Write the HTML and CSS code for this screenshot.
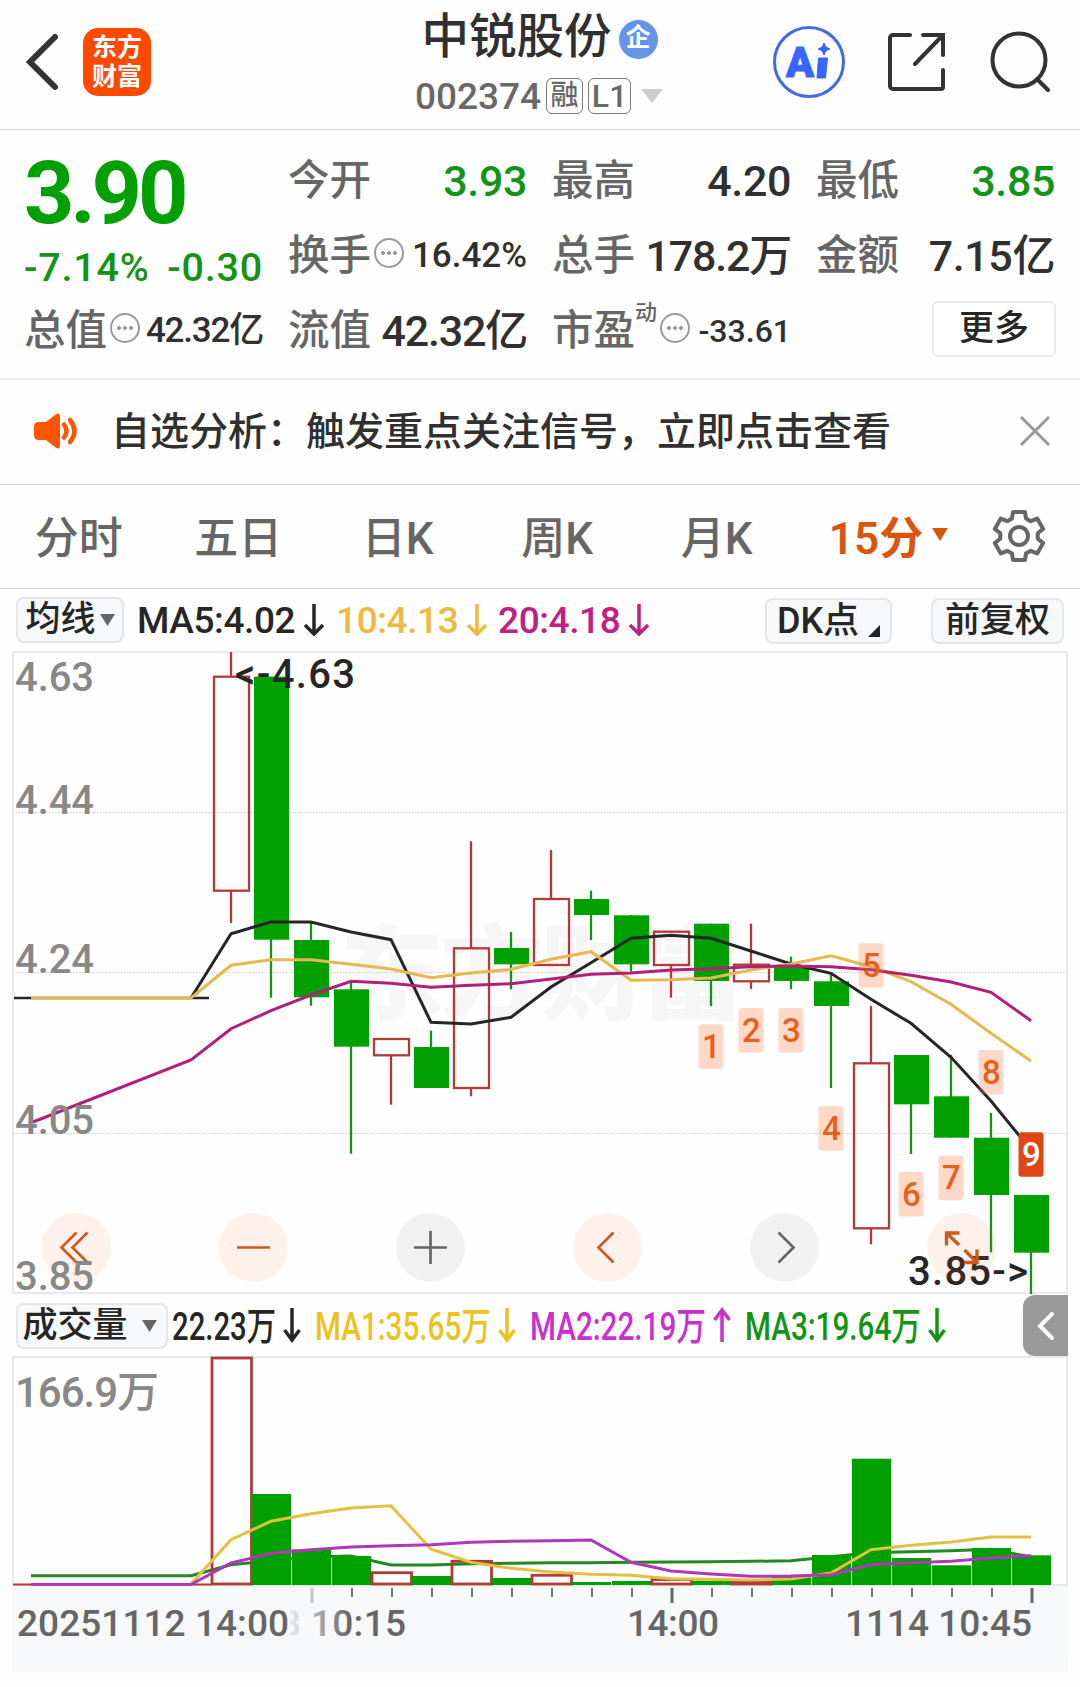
FILE: index.html
```html
<!DOCTYPE html>
<html lang="zh-CN">
<head>
    <meta charset="UTF-8">
    <meta name="viewport" content="width=device-width, initial-scale=1.0">
    <title>中锐股份 002374</title>
    <link rel="stylesheet" href="styles.css">
</head>
<body>
    <!-- Top bar -->
    <header class="topbar">
        <div class="topbar-left">
            <svg class="back" width="34" height="60" viewBox="0 0 34 60"><path d="M30 5L5 30l25 25" /></svg>
            <div class="logo"><span>东方</span><span>财富</span></div>
        </div>
        <div class="stock">
            <div class="stock-name">中锐股份<span class="corp">企</span></div>
            <div class="stock-code">
                <span class="code">002374</span><span class="tag">融</span><span class="tag tag-l1">L1</span>
                <svg class="code-arrow" width="22" height="14"><path d="M0 0h22L11 14z" /></svg>
            </div>
        </div>
        <div class="topbar-right">
            <svg class="ai" width="74" height="74" viewBox="0 0 74 74">
                <circle cx="37" cy="37" r="34.5" />
                <text x="14" y="52" textLength="28" lengthAdjust="spacingAndGlyphs">A</text>
                <path d="M46.500 33h9l-2 20h-8.500z M52 18l1.800 4 4 2-4 2-1.800 4-1.800-4-4-2 4-2z" />
            </svg>
            <svg class="share" width="62" height="62" viewBox="0 0 62 62">
                <path d="M23 4H6a3 3 0 0 0-3 3v48a3 3 0 0 0 3 3h48a2 2 0 0 0 2-2V39M36 4h20v20M56 4L28 33" />
            </svg>
            <svg class="search" width="64" height="64" viewBox="0 0 64 64">
                <circle cx="31" cy="30" r="26.500" /><path d="M49 49l11 11" />
            </svg>
        </div>
    </header>

    <!-- Quote summary -->
    <section class="quote">
        <div class="price-box">
            <div class="price">3.90</div>
            <div class="change"><span>-7.14%</span><span>-0.30</span></div>
        </div>
        <div class="item"><span class="label">今开</span><span class="value green">3.93</span></div>
        <div class="item"><span class="label">最高</span><span class="value">4.20</span></div>
        <div class="item"><span class="label">最低</span><span class="value green">3.85</span></div>
        <div class="item"><span class="label">换手</span><i class="dots"></i><span class="value mid">16.42%</span></div>
        <div class="item"><span class="label">总手</span><span class="value unit">178.2万</span></div>
        <div class="item"><span class="label">金额</span><span class="value">7.15亿</span></div>
        <div class="item"><span class="label">总值</span><i class="dots"></i><span class="value mid unit">42.32亿</span></div>
        <div class="item"><span class="label">流值</span><span class="value unit">42.32亿</span></div>
        <div class="item"><span class="label">市盈</span><sup class="dyn">动</sup><i class="dots"></i><span class="value small">-33.61</span></div>
        <button class="more">更多</button>
    </section>

    <!-- Notice -->
    <section class="notice">
        <svg class="horn" width="48" height="38" viewBox="0 0 48 38">
            <path class="horn-body" d="M7 10h7l9-7q5-4 5 2v28q0 6-5 2l-9-7H7q-5 0-5-5v-8q0-5 5-5z" />
            <path class="horn-wave" d="M32 12.500q5 6.500 0 13M38 8q9 11 0 22" />
        </svg>
        <p>自选分析：触发重点关注信号，立即点击查看</p>
        <svg class="close" width="30" height="30"><path d="M1 1l28 28M29 1L1 29" /></svg>
    </section>

    <!-- Period tabs -->
    <nav class="tabs">
        <a>分时</a>
        <a>五日</a>
        <a>日K</a>
        <a>周K</a>
        <a>月K</a>
        <a class="active">15分<svg width="16" height="13"><path d="M0 0h16L8 13z" /></svg></a>
        <svg class="gear" width="54" height="54" viewBox="-27 -27 54 54">
            <path d="M-7-17.500L-6-24h12l1 6.500 4.700 2.700 6.500-2.600 6 10.300-5.500 4.400v5.400l5.500 4.400-6 10.300-6.500-2.600L7 17.500 6 24H-6l-1-6.500-4.700-2.700-6.500 2.600-6-10.300 5.500-4.400v-5.400l-5.500-4.400 6-10.300 6.500 2.600z" />
            <circle r="9" />
        </svg>
    </nav>

    <!-- Moving averages -->
    <div class="legend">
        <button class="btn btn-ma">均线<svg width="15" height="12"><path d="M0 0h15L7.500 12z" /></svg></button>
        <span class="ma ma5">MA5:4.02<svg class="arrow" width="22" height="32"><path d="M11 0v30M2 21l9 9 9-9" /></svg></span>
        <span class="ma ma10">10:4.13<svg class="arrow" width="22" height="32"><path d="M11 0v30M2 21l9 9 9-9" /></svg></span>
        <span class="ma ma20">20:4.18<svg class="arrow" width="22" height="32"><path d="M11 0v30M2 21l9 9 9-9" /></svg></span>
        <button class="btn btn-dk">DK点<svg width="12" height="12"><path d="M12 0v12H0z" /></svg></button>
        <button class="btn btn-fq">前复权</button>
    </div>

    <!-- Candles -->
    <svg class="chart" id="kline" width="1080" height="644" viewBox="0 651 1080 644">
        <text class="watermark" x="340" y="1012" textLength="405">东方财富</text>
        <rect class="frame" x="13" y="652" width="1054" height="641" />
        <path class="grid" d="M13 812.500h1054M13 972.500h1054M13 1133.500h1054" />
        <g id="candles"></g>
        <path class="flat" d="M14 998h195" />
        <g id="maLines"></g>
        <g id="marks"></g>
        <text class="tip" x="908" y="1285" textLength="120">3.85-&gt;</text>
        <g class="tool hot">
            <circle cx="76.500" cy="1247.500" r="34.500" /><circle cx="253.500" cy="1247.500" r="34.500" />
            <circle cx="607.500" cy="1247.500" r="34.500" /><circle cx="961.500" cy="1247.500" r="34.500" />
            <path d="M76.500 1232.500l-15 15 15 15M87.500 1232.500l-15 15 15 15M237 1247.500h33M613.500 1232.500l-15 15 15 15" />
            <path class="expand" d="M946.500 1245.500v-12.500h13M947 1233.500l12 11.500M977 1249.500v13h-13M976.500 1262l-12-12" />
        </g>
        <g class="tool">
            <circle cx="430.500" cy="1247.500" r="34.500" /><circle cx="784.500" cy="1247.500" r="34.500" />
            <path d="M414 1247.500h33M430.500 1231v33M778.500 1232.500l15 15-15 15" />
        </g>
        <g class="scale">
            <text x="15" y="690.500" textLength="79">4.63</text>
            <text x="15" y="813.500" textLength="79">4.44</text>
            <text x="15" y="973" textLength="79">4.24</text>
            <text x="15" y="1134" textLength="79">4.05</text>
            <text x="15" y="1290" textLength="79">3.85</text>
        </g>
        <text class="tip" x="235" y="688" textLength="120">&lt;-4.63</text>
    </svg>

    <!-- Volume -->
    <div class="legend legend-vol">
        <button class="btn btn-vol">成交量<svg width="15" height="12"><path d="M0 0h15L7.500 12z" /></svg></button>
        <svg class="vol-values" width="800" height="60" viewBox="168 1295 800 60">
            <g class="v0"><text x="172" y="1338.500" textLength="104" lengthAdjust="spacingAndGlyphs">22.23万</text><path d="M292 1307v32M284.500 1329l7.500 10 7.500-10" /></g>
            <g class="v1"><text x="315" y="1338.500" textLength="176" lengthAdjust="spacingAndGlyphs">MA1:35.65万</text><path d="M507 1307v32M499.500 1329l7.500 10 7.500-10" /></g>
            <g class="v2"><text x="530" y="1338.500" textLength="176" lengthAdjust="spacingAndGlyphs">MA2:22.19万</text><path d="M722 1341v-32M714.500 1319l7.500-10 7.500 10" /></g>
            <g class="v3"><text x="745" y="1338.500" textLength="176" lengthAdjust="spacingAndGlyphs">MA3:19.64万</text><path d="M937 1307v32M929.500 1329l7.500 10 7.500-10" /></g>
        </svg>
        <button class="side"><svg width="18" height="28"><path d="M15 2L3 14l12 12" /></svg></button>
    </div>
    <svg class="chart" width="1080" height="316" viewBox="0 1356 1080 316">
        <defs>
            <linearGradient id="fade" gradientUnits="userSpaceOnUse" x1="285" x2="350" y1="0" y2="0">
                <stop offset="0" stop-color="#f4f4f5" /><stop offset="1" stop-color="#666" />
            </linearGradient>
        </defs>
        <rect class="axis" x="12" y="1586" width="1056" height="86" />
        <rect class="frame" x="13" y="1357" width="1054" height="228" />
        <path class="red-line" d="M13 1584.500h199" />
        <g id="volBack"></g>
        <g id="bars"></g>
        <g id="volLines"></g>
        <g id="ticks"></g>
        <text class="vol-max" x="15" y="1407" textLength="144">166.9万</text>
        <g class="time">
            <text class="faded" x="280" y="1636" textLength="126">3 10:15</text>
            <rect class="axis" x="276" y="1606" width="14" height="34" />
            <text x="17" y="1636" textLength="272">20251112 14:00</text>
            <text x="627" y="1636" textLength="92">14:00</text>
            <text x="845" y="1636" textLength="187">1114 10:45</text>
        </g>
    </svg>
    <script src="script.js"></script>
</body>
</html>
```

FILE: styles.css
```css
* {
    box-sizing: border-box;
}

body {
    margin: 0;
    width: 1080px;
    height: 1687px;
    overflow: hidden;
    background: #fefefe;
    color: #303030;
    font-family: Roboto, "Noto Sans CJK SC", sans-serif;
    font-weight: 500;
}

svg {
    display: block;
    flex: none;
    fill: none;
    overflow: visible;
}

button {
    margin: 0;
    padding: 0;
    font: inherit;
    color: #262626;
}

/* top bar */
.topbar {
    display: grid;
    grid-template-columns: 1fr auto 1fr;
    height: 130px;
    border-bottom: 1px solid #d4d4d4;
}

.topbar-left {
    display: flex;
    align-items: center;
    padding: 0 0 5px 25px;
    gap: 24px;
}

.back path {
    stroke: #333;
    stroke-width: 6;
    stroke-linecap: round;
}

.logo {
    display: flex;
    flex-direction: column;
    justify-content: center;
    align-items: center;
    width: 68px;
    height: 68px;
    border-radius: 15px;
    background: #ff4800;
    color: #fff;
    font-size: 25px;
    font-weight: 700;
    line-height: 29px;
}

.stock {
    display: flex;
    flex-direction: column;
    align-items: center;
    margin-left: -2px;
}

.stock-name {
    display: flex;
    align-items: center;
    height: 76px;
    padding: 0 0 2px 1px;
    font-size: 47.5px;
    line-height: 70px;
    gap: 7px;
}

.corp {
    width: 39px;
    height: 39px;
    margin-top: 4px;
    border-radius: 50%;
    background: #6495e8;
    color: #fff;
    font-size: 25px;
    font-weight: 700;
    line-height: 36px;
    text-align: center;
}

.stock-code {
    display: flex;
    align-items: center;
    height: 40px;
    color: #686868;
}

.code {
    margin-right: 5px;
    font-size: 37px;
}

.tag {
    width: 37px;
    height: 36px;
    margin-right: 5px;
    border: 1px solid #777;
    border-radius: 6px;
    font-size: 28px;
    line-height: 34px;
    text-align: center;
}

.tag-l1 {
    width: 43px;
    margin-right: 10px;
    font-size: 32px;
    line-height: 35px;
}

.code-arrow {
    fill: #ccc;
}

.topbar-right {
    display: flex;
    justify-content: flex-end;
    align-items: center;
    padding: 0 28px 5px 0;
    gap: 39px;
}

.ai {
    margin-right: 2px;
}

.ai circle {
    stroke: #4169e1;
    stroke-width: 3;
}

.ai text,
.ai path {
    fill: #3766ff;
    stroke: #3766ff;
    stroke-width: 1;
    font-size: 42px;
    font-weight: 900;
}

.share,
.search {
    stroke: #333;
    stroke-width: 4;
    stroke-linecap: round;
}

/* quote */
.quote {
    display: grid;
    grid-template-columns: repeat(4, 239px);
    grid-template-rows: repeat(3, 75px);
    column-gap: 25px;
    height: 250px;
    padding: 12px 24px 0;
    border-bottom: 2px solid #ebebeb;
}

.price-box {
    grid-row: span 2;
    color: #00a000;
}

.price {
    height: 97px;
    font-size: 88px;
    font-weight: 700;
    line-height: 102px;
    letter-spacing: -4.2px;
}

.change {
    display: flex;
    justify-content: space-between;
    color: #149414;
    font-size: 39.5px;
    line-height: 58px;
    letter-spacing: 0.8px;
}

.item {
    display: flex;
    align-items: center;
    padding-top: 2px;
    white-space: nowrap;
    line-height: 60px;
}

.label {
    margin-top: 1px;
    color: #666;
    font-size: 41.5px;
}

.value {
    margin-left: auto;
    font-size: 43px;
    letter-spacing: -0.4px;
}

.green {
    color: #149414;
}

.mid {
    font-size: 35px;
    letter-spacing: 0;
}

.unit {
    letter-spacing: -1.2px;
}

.small {
    font-size: 32px;
    letter-spacing: 0;
}

.dots {
    width: 30px;
    height: 30px;
    margin: -6px 0 0 3px;
    border: 2px solid #999;
    border-radius: 50%;
    background: radial-gradient(circle, #999 1.6px, transparent 2.2px) center / 6px 6px no-repeat,
        radial-gradient(circle, #999 1.6px, transparent 2.2px) 4px 10px / 6px 6px no-repeat,
        radial-gradient(circle, #999 1.6px, transparent 2.2px) 16px 10px / 6px 6px no-repeat;
}

.dyn {
    align-self: flex-start;
    color: #666;
    font-size: 22px;
    line-height: 38px;
}

.more {
    justify-self: end;
    align-self: center;
    width: 124px;
    height: 56px;
    margin: 0 -1px 2px 0;
    border: 2px solid #eaeaea;
    border-radius: 6px;
    background: #fff;
    font-size: 35px;
    line-height: 50px;
}

/* notice */
.notice {
    display: flex;
    align-items: center;
    height: 105px;
    padding: 0 30px 0 32px;
    border-bottom: 1px solid #d4d4d4;
}

.notice svg {
    margin-bottom: 2px;
}

.notice p {
    flex: 1;
    margin: 0 0 9px 31px;
    font-size: 39px;
    white-space: nowrap;
}

.horn-body {
    fill: #ff5500;
}

.horn-wave {
    stroke: #ff5500;
    stroke-width: 4.5;
    stroke-linecap: round;
}

.close {
    stroke: #999;
    stroke-width: 3;
}

/* tabs */
.tabs {
    display: grid;
    grid-template-columns: repeat(5, 159.5px) 184px 1fr;
    align-items: center;
    height: 104px;
    padding-bottom: 4px;
    border-bottom: 1px solid #d4d4d4;
    color: #666;
    font-size: 44px;
    text-align: center;
}

.tabs a {
    margin-left: -2px;
}

.tabs .active {
    display: flex;
    justify-content: center;
    align-items: center;
    gap: 9px;
    color: #d9560f;
    font-weight: 600;
}

.active svg {
    fill: #d9560f;
}

.gear {
    margin: 3px 0 0 10px;
    stroke: #666;
    stroke-width: 4;
    stroke-linejoin: round;
}

/* indicator rows */
.legend {
    display: flex;
    align-items: center;
    height: 62px;
    padding: 0 16px;
}

.btn {
    display: flex;
    justify-content: center;
    align-items: center;
    height: 46px;
    border: 2px solid #e4e6e9;
    border-radius: 8px;
    background: #f7f8fa;
    font-size: 35px;
    line-height: 40px;
    white-space: nowrap;
}

.btn svg {
    fill: #666;
}

.btn-ma {
    width: 108px;
    margin-right: 13px;
    gap: 4px;
}

.ma {
    display: flex;
    align-items: center;
    font-size: 37px;
}

.arrow {
    margin-left: 8px;
    stroke: currentColor;
    stroke-width: 3.5;
}

.ma5 {
    width: 199px;
    color: #262626;
    letter-spacing: -0.4px;
}

.ma10 {
    width: 162px;
    color: #f0b840;
    letter-spacing: -0.4px;
}

.ma20 {
    color: #c02080;
    letter-spacing: -0.4px;
}

.btn-dk {
    width: 127px;
    margin: 1px 39px 0 auto;
    font-size: 36px;
    gap: 9px;
}

.btn-dk svg {
    margin-top: 20px;
    fill: #262626;
}

.btn-fq {
    width: 133px;
    margin-top: 1px;
}

.legend-vol {
    height: 61px;
    padding: 0 12px 0 16px;
}

.btn-vol {
    width: 152px;
    padding-right: 5px;
    gap: 14px;
}

.vol-values text {
    font-size: 39px;
}

.vol-values path {
    stroke-width: 3.5;
}

.v0 { fill: #262626; }
.v1 { fill: #ecc220; }
.v2 { fill: #c830d0; }
.v3 { fill: #149414; }
.v0 path { stroke: #262626; fill: none; }
.v1 path { stroke: #ecc220; fill: none; }
.v2 path { stroke: #c830d0; fill: none; }
.v3 path { stroke: #149414; fill: none; }

.side {
    display: flex;
    justify-content: center;
    align-items: center;
    width: 45px;
    height: 61px;
    margin-left: auto;
    border: 0;
    border-radius: 12px 0 0 12px;
    background: #999;
}

.side path {
    stroke: #fff;
    stroke-width: 4;
    stroke-linecap: round;
}

/* charts */
.frame {
    stroke: #e2e2e2;
    stroke-width: 1.5;
}

.grid {
    stroke: #ccc;
    stroke-dasharray: 1.5 1.5;
}

.watermark {
    fill: #f6f6f6;
    font-size: 104px;
    font-weight: 900;
}

.up {
    fill: none;
    stroke: #b23a38;
    stroke-width: 2.3;
}

.vol-up {
    stroke-width: 2.8;
}

.down {
    fill: #00a000;
}

.wick-down {
    stroke: #149414;
    stroke-width: 2.3;
}

.flat {
    stroke: #262626;
    stroke-width: 2.5;
}

.line {
    fill: none;
    stroke-width: 3;
}

.mark {
    fill: #ff7733;
    fill-opacity: 0.27;
}

.mark-last {
    fill: #e04516;
}

.mark-text {
    fill: #e8601c;
    font-size: 33px;
    text-anchor: middle;
}

.mark-last-text {
    fill: #fff;
}

.tool circle {
    fill: #000;
    fill-opacity: 0.05;
}

.tool path {
    stroke: #666;
    stroke-width: 2.7;
}

.hot circle {
    fill: #ff6622;
    fill-opacity: 0.09;
}

.hot path {
    stroke: #cc5a1e;
}

.hot .expand {
    stroke-width: 3.4;
}

.scale text {
    fill: #888;
    font-size: 40px;
}

.tip {
    fill: #262626;
    font-size: 40px;
}

.axis {
    fill: #f7f8fa;
}

.red-line {
    stroke: #b23a38;
    stroke-width: 2;
}

.vol-max {
    fill: #888;
    font-size: 42px;
}

.time text {
    fill: #666;
    font-size: 37px;
}

.time .faded {
    fill: url(#fade);
}

.tick {
    stroke: #777;
    stroke-width: 2;
}

.tick-big {
    stroke: #666;
    stroke-width: 3;
}

.tick-day {
    stroke: #c4c4c4;
    stroke-width: 3;
}
```

FILE: script.js
```javascript
const NS = 'http://www.w3.org/2000/svg';
const STEP = 40;
const FIRST = 231;

// direction, high, top, bottom, low
const candles = [
    ['up', 652, 676.7, 890.7, 923],
    ['down', 676.7, 676.7, 939.7, 997.7],
    ['down', 922.7, 940, 997.3, 1005.7],
    ['down', 981, 989.3, 1046.7, 1153.7],
    ['up', 1039, 1039, 1055.3, 1104.7],
    ['down', 1030.7, 1047, 1088, 1088],
    ['up', 841.3, 948.3, 1088, 1096.3],
    ['down', 932, 948, 964.3, 989.3],
    ['up', 850, 899, 965, 965],
    ['down', 890.7, 899, 915, 940],
    ['down', 915, 915.3, 964.3, 971.7],
    ['up', 931.7, 931.7, 965, 997.7],
    ['down', 923.7, 923.7, 981, 1006],
    ['up', 923.7, 964.7, 981.3, 989],
    ['down', 956.7, 965.3, 981, 989],
    ['down', 973, 981.3, 1006, 1088],
    ['up', 1006, 1063.3, 1228.3, 1244.3],
    ['down', 1055, 1055, 1104.3, 1154],
    ['down', 1055, 1096.3, 1137.7, 1137.7],
    ['down', 1113, 1137.7, 1195, 1252.3],
    ['down', 1195, 1195, 1252.7, 1294]
];

const barTops = [1358, 1494, 1549.3, 1556, 1572.7, 1576, 1561.3, 1578, 1575.3, 1582, 1581,
    1579.5, 1580.7, 1581.5, 1576, 1555, 1458.7, 1558, 1565.3, 1548, 1555.3];

// hollow volume bars
const upBars = [0, 4, 6, 8, 11, 13];

// lead-in points, then one value per candle
const maLines = [
    ['#262626', '191,998', [933.7, 922, 922, 932, 939.7, 1022.3, 1024, 1017.3, 987, 962.7, 938.3,
        935.3, 938.3, 951, 964, 973.3, 999.3, 1023.3, 1057.3, 1101, 1150]],
    ['#e8b850', '31,998 191,998', [965.3, 959.7, 959.7, 964.3, 969, 977.7, 973, 969.3, 959.3, 951.7, 980.3,
        979.7, 978, 970, 964, 955.7, 966.7, 981.7, 1004.3, 1033.3, 1061]],
    ['#b02078', '33,1122 191,1060', [1028.7, 1010.7, 995, 981.3, 983.3, 987.3, 985.3, 983.7, 979, 974.3, 973,
        970, 968.7, 966.7, 966, 966.7, 969.7, 975.3, 982, 992.3, 1020.7]]
];

const volBack = [
    ['#228a22', '31,1575.7 191,1575.7', [1564.7, 1560.7, 1557, 1556, 1565, 1565, 1563.7, 1563.3, 1562.7, 1562.7, 1562.3,
        1562, 1561.7, 1561.3, 1560.7, 1556.7, 1552.7, 1551.7, 1550.7, 1549.3, 1557]]
];

const volLines = [
    ['#e2c040', '191,1584', [1539.7, 1521.3, 1513.7, 1508, 1505.7, 1549.3, 1562.3, 1568.3, 1572, 1574.3, 1575.3,
        1578.7, 1579.3, 1580, 1579, 1573, 1549.7, 1545.3, 1542, 1537, 1537]],
    ['#b038b8', '31,1584.5 191,1584.5', [1563, 1553.3, 1549.7, 1547, 1545.7, 1544.7, 1542.3, 1541.3, 1540.7, 1540, 1562.3,
        1571, 1574, 1576.3, 1576, 1574.7, 1564.7, 1562.7, 1561.3, 1558, 1555.7]]
];

// top edge of the count marks, starting at candle 13
const marks = [1024.3, 1008, 1008, 1106.3, 943.3, 1172, 1155.7, 1050, 1132.3];

function add(parent, tag, attrs, text) {
    const el = document.createElementNS(NS, tag);
    for (const key in attrs) {
        el.setAttribute(key, attrs[key]);
    }
    if (text) {
        el.textContent = text;
    }
    document.getElementById(parent).appendChild(el);
}

function drawLines(parent, lines) {
    lines.forEach(([color, lead, values]) => {
        const points = lead + ' ' + values.map((y, i) => (FIRST + i * STEP) + ',' + y).join(' ');
        add(parent, 'polyline', { class: 'line', points: points, stroke: color });
    });
}

candles.forEach(([dir, high, top, bottom, low], i) => {
    const x = FIRST + i * STEP;
    if (dir === 'up') {
        add('candles', 'rect', { class: 'up', x: x - 17, y: top, width: 35, height: bottom - top });
        add('candles', 'path', { class: 'up', d: `M${x} ${high}V${top}M${x} ${bottom}V${low}` });
    } else {
        add('candles', 'path', { class: 'wick-down', d: `M${x} ${high}V${low}` });
        add('candles', 'rect', { class: 'down', x: x - 17, y: top, width: 35, height: bottom - top });
    }
});

barTops.forEach((top, i) => {
    const x = FIRST + i * STEP;
    if (upBars.includes(i)) {
        add('bars', 'rect', { class: 'up vol-up', x: x - 19, y: top, width: 39.5, height: 1584 - top });
    } else {
        add('bars', 'rect', { class: 'down', x: x + 21 - STEP, y: top, width: 39, height: 1585 - top });
    }
});

drawLines('maLines', maLines);
drawLines('volBack', volBack);
drawLines('volLines', volLines);

marks.forEach((y, i) => {
    const x = FIRST + (i + 12) * STEP;
    const last = i === marks.length - 1;
    add('marks', 'rect', { class: last ? 'mark-last' : 'mark', x: x - 12.5, y: y, width: 25, height: 44.5, rx: 3 });
    add('marks', 'text', { class: 'mark-text' + (last ? ' mark-last-text' : ''), x: x + 0.5, y: y + 33.5 }, String(i + 1));
});

for (let i = 2; i < candles.length; i++) {
    const x = FIRST + 1 + i * STEP;
    if (i === 2) {
        add('ticks', 'path', { class: 'tick-day', d: `M${x} 1588v15` });
    } else if (i === 11 || i === 20) {
        add('ticks', 'path', { class: 'tick-big', d: `M${x} 1588v15` });
    } else {
        add('ticks', 'path', { class: 'tick', d: `M${x} 1588v9` });
    }
}
```
